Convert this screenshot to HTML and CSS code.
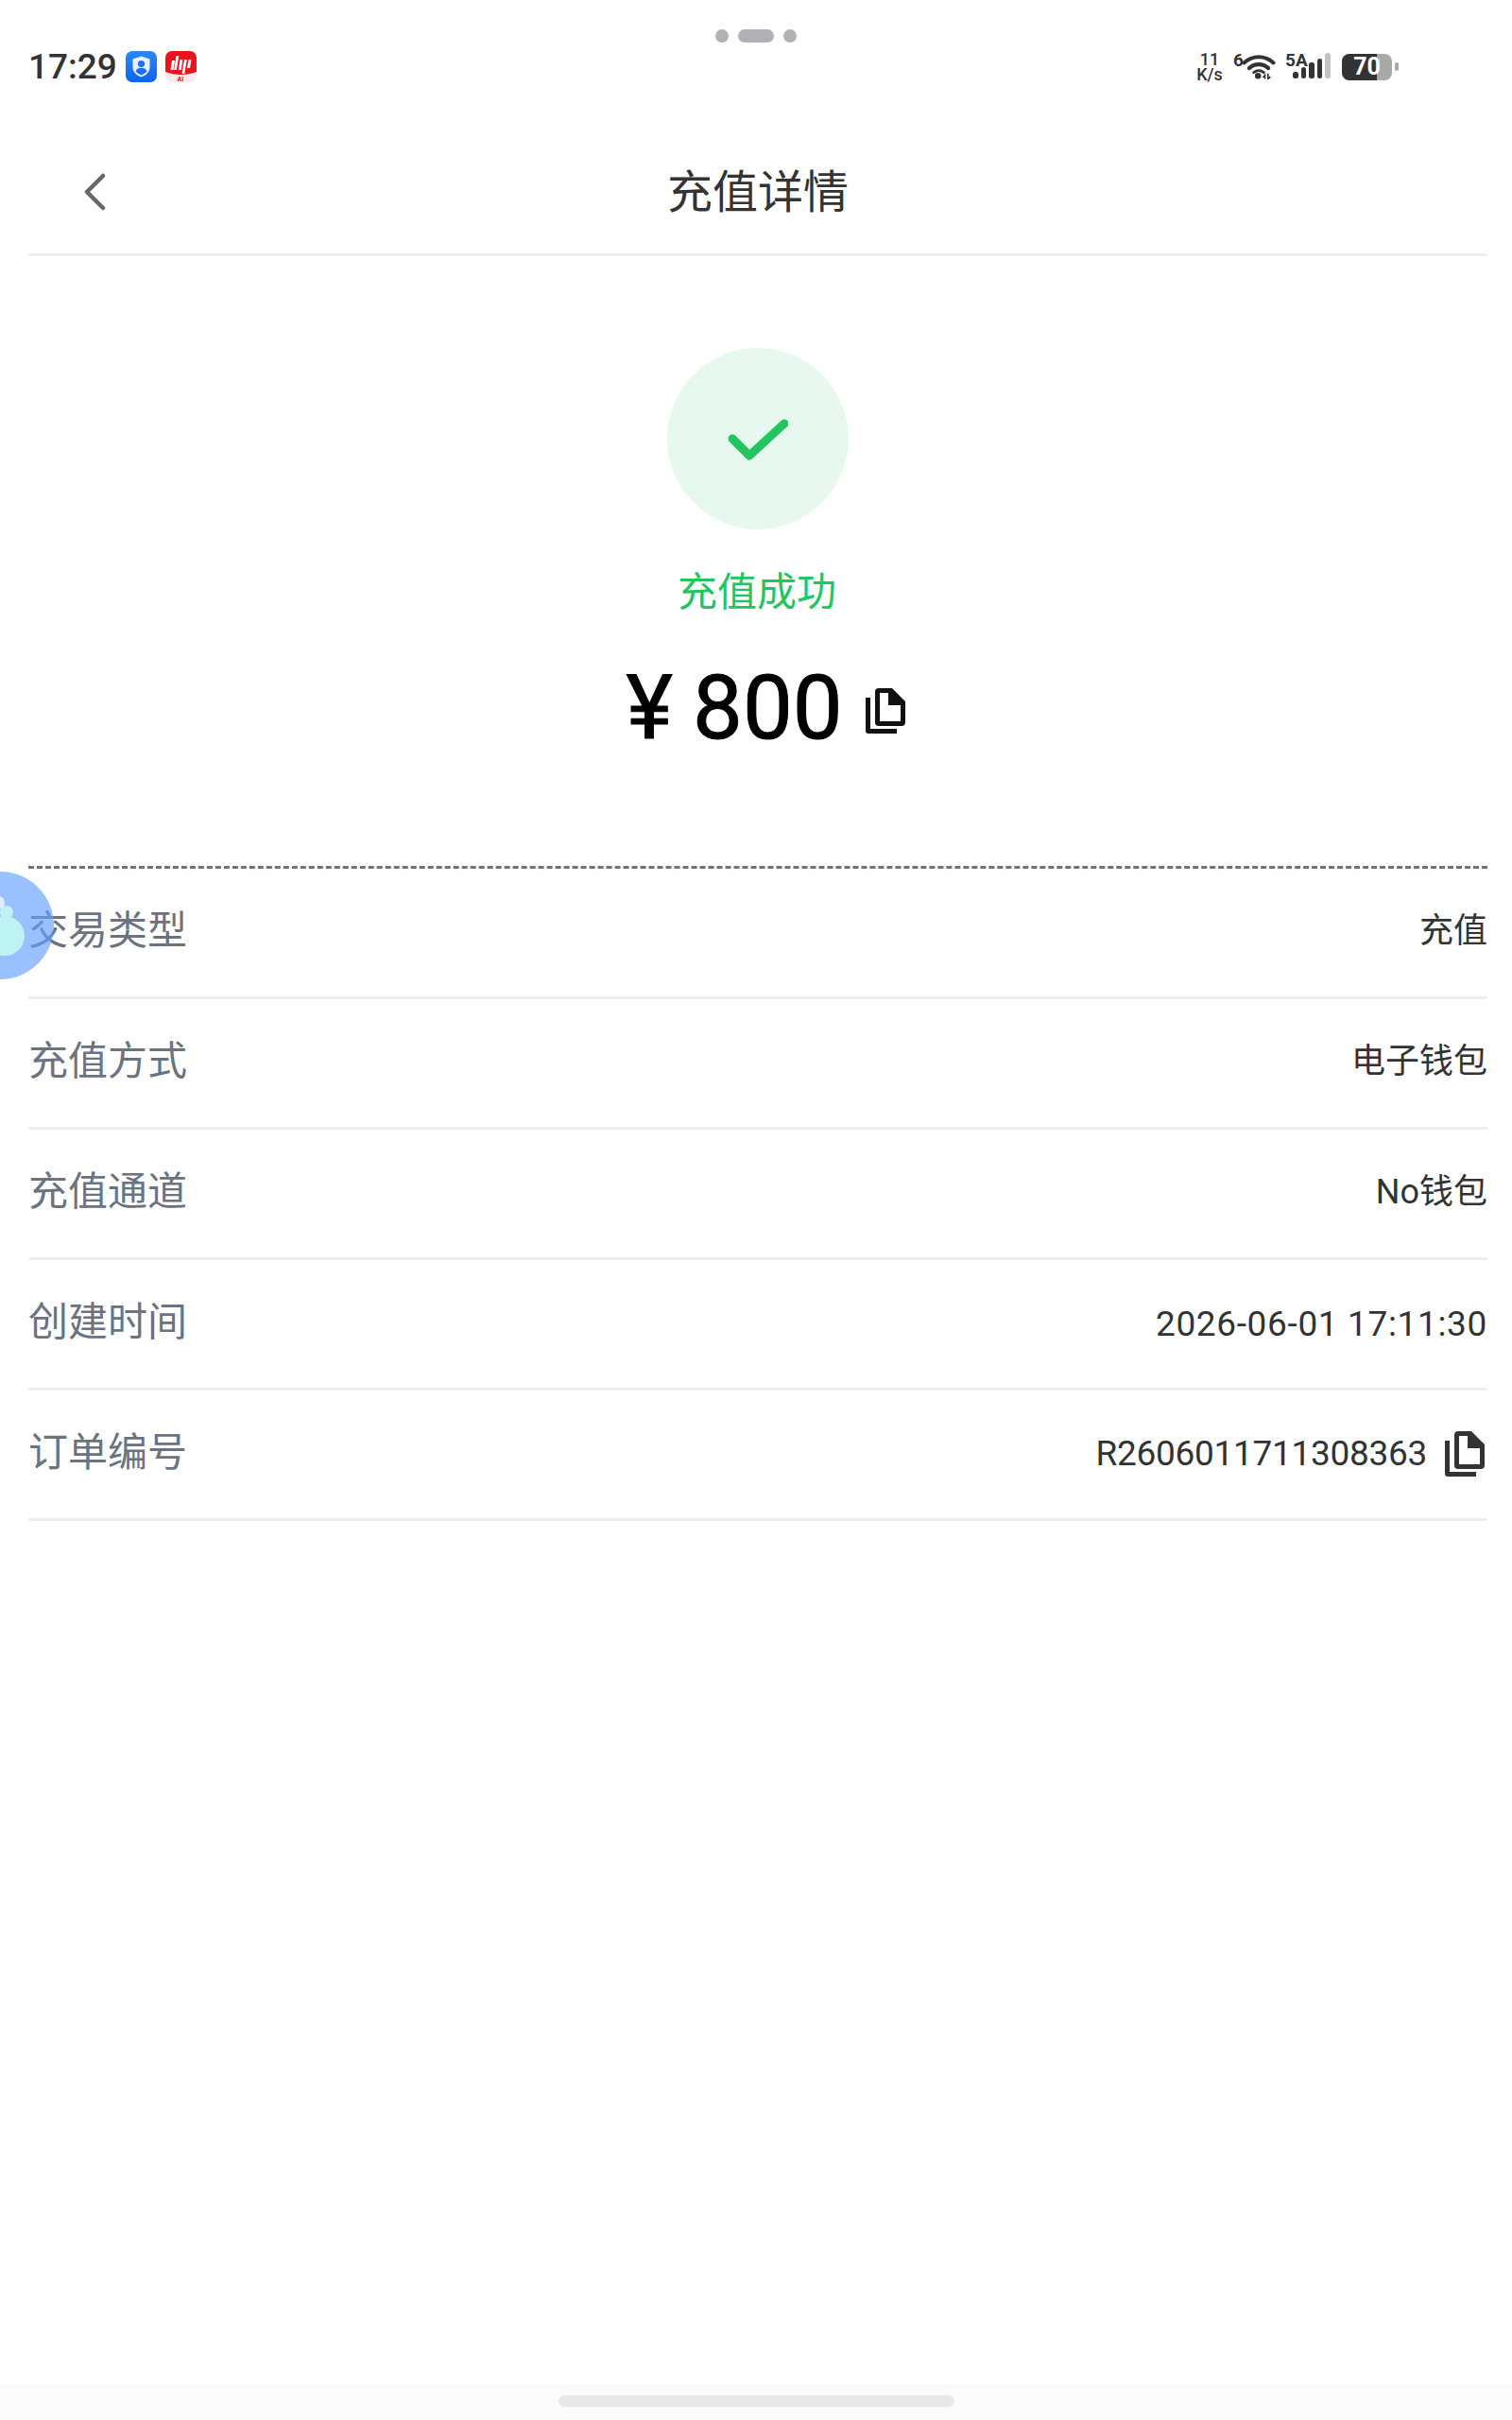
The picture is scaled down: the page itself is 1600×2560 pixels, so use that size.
FILE: index.html
```html
<!DOCTYPE html>
<html lang="zh-CN">
<head>
<meta charset="utf-8">
<title>充值详情</title>
<link rel="stylesheet" href="styles.css">
</head>
<body>
<div class="page">
  <div class="pills"><i class="dot"></i><i class="bar"></i><i class="dot"></i></div>

  <div class="status">
    <div class="status-left">
      <span class="clock">17:29</span>
      <svg class="app-icon" viewBox="0 0 33 33"><defs><linearGradient id="bl" x1="0" y1="0" x2="0" y2="1"><stop offset="0" stop-color="#2f86f6"/><stop offset="1" stop-color="#0e62f2"/></linearGradient></defs><rect width="33" height="33" rx="7" fill="url(#bl)"/><path d="M16.5 5.5 25.5 8.5V17C25.500 22.500 21 25.800 16.500 27.500 12 25.800 7.500 22.500 7.500 17V8.500Z" fill="#e8f2ff"/><circle cx="16.500" cy="13.500" r="3.600" fill="#1f6ff0"/><path d="M10.500 21.500C11.500 18.500 14 17.800 16.500 17.800S21.500 18.500 22.500 21.500C20.800 23.500 18.500 24.800 16.500 25.500 14.500 24.800 12.200 23.500 10.500 21.500Z" fill="#1f6ff0"/></svg>
      <svg class="app-icon" viewBox="0 0 33 33"><rect width="33" height="33" rx="7" fill="#fbeaea"/><path d="M0 7a7 7 0 0 1 7-7h19a7 7 0 0 1 7 7v15c-5 2-11 3-16.500 3S5 24 0 22Z" fill="#e8141c"/><path d="M7 10h3l-1.500 10H5.500ZM11.500 5h2.800l-2.500 15H9ZM15.500 9h2.800l-1.500 11h-2.800ZM20 9h2.800l-2.500 15h-2.800ZM24.500 9h3l-1.500 9h-3Z" fill="#fff"/><text class="ai-text" x="16" y="32" text-anchor="middle">AI</text></svg>
    </div>
    <div class="status-right">
      <span class="speed">11<br>K/s</span>
      <span class="wifi-wrap">
        <span class="wifi-six">6</span>
        <svg class="wifi" viewBox="0 0 44 32"><path d="M3 11C14 1 30 1 41 11" fill="none" stroke="#333" stroke-width="5" stroke-linecap="round"/><path d="M9.500 18C17 11.500 27 11.500 34.500 18" fill="none" stroke="#333" stroke-width="5" stroke-linecap="round"/><path d="M15.500 23.500C19.500 20.500 24.500 20.500 28.500 23.500" fill="none" stroke="#333" stroke-width="3.500" stroke-linecap="round"/><circle cx="21" cy="28" r="4" fill="#333"/><path d="M30 32V27L27.500 30M34 25V32L37 29" fill="none" stroke="#333" stroke-width="2"/></svg>
      </span>
      <span class="signal-wrap">
        <span class="signal-label">5A</span>
        <span class="signal"><i class="s1"></i><i class="s2"></i><i class="s3"></i><i class="s4"></i><i class="s5"></i></span>
      </span>
      <span class="battery"><span class="battery-body"><span class="battery-fill"></span><span class="battery-text">70</span></span><i class="battery-nub"></i></span>
    </div>
  </div>

  <header class="nav">
    <svg class="back" viewBox="0 0 24 40"><path d="M21 3 4 20 21 37" fill="none" stroke="#666" stroke-width="4.500" stroke-linecap="round" stroke-linejoin="round"/></svg>
    <h1 class="title">充值详情</h1>
  </header>

  <section class="hero">
    <div class="success-circle">
      <svg class="check" viewBox="0 0 64 46"><path d="M5 21 23 39 60 5" fill="none" stroke="#22c55e" stroke-width="9" stroke-linecap="round" stroke-linejoin="round"/></svg>
    </div>
    <div class="success-text">充值成功</div>
    <div class="amount">
      <span class="amount-value">¥ 800</span>
      <svg class="copy copy-big" viewBox="0 0 42 48"><use href="#copy-shape"/></svg>
    </div>
  </section>

  <section class="details">
    <div class="row"><span class="label">交易类型</span><span class="value">充值</span></div>
    <div class="row"><span class="label">充值方式</span><span class="value">电子钱包</span></div>
    <div class="row"><span class="label">充值通道</span><span class="value">No钱包</span></div>
    <div class="row"><span class="label">创建时间</span><span class="value value-date">2026-06-01 17:11:30</span></div>
    <div class="row"><span class="label">订单编号</span><span class="value value-order">R2606011711308363<svg class="copy copy-small" viewBox="0 0 42 48"><use href="#copy-shape"/></svg></span></div>
  </section>

  <div class="float-ball">
    <svg viewBox="0 0 60 114"><circle cx="5" cy="68" r="21" fill="#bdf3f2"/><circle cx="7" cy="43" r="7" fill="#bdf3f2"/><circle cx="-2" cy="33" r="7" fill="#ffffff" opacity=".7"/></svg>
  </div>

  <div class="gesture"><i class="gesture-bar"></i></div>
</div>

<svg class="defs" width="0" height="0" aria-hidden="true"><defs>
  <symbol id="copy-shape" viewBox="0 0 42 48">
    <path fill="currentColor" fill-rule="evenodd" d="M14 0H28L42 14V36A4 4 0 0 1 38 40H14A4 4 0 0 1 10 36V4A4 4 0 0 1 14 0ZM15 5V35H37V18H24V5Z"/>
    <path fill="currentColor" d="M0 10H5V43H33V48H3A3 3 0 0 1 0 45Z"/>
  </symbol>
</defs></svg>
</body>
</html>
```
FILE: styles.css
```css
* { box-sizing: border-box; }
html, body { margin: 0; padding: 0; background: #fff; }
.page {
  position: relative;
  width: 1600px;
  height: 2560px;
  display: flex;
  flex-direction: column;
  overflow: hidden;
  font-family: Roboto, "Noto Sans CJK SC", sans-serif;
  color: #333;
}
.defs { position: absolute; }

.pills {
  position: absolute;
  top: 31px;
  left: 757px;
  display: flex;
  align-items: center;
  gap: 10px;
}
.pills i { display: block; height: 14px; background: #b2b2b6; border-radius: 7px; }
.pills .dot { width: 14px; }
.pills .bar { width: 38px; }

.status {
  height: 116px;
  padding: 54px 120px 0 30px;
  display: flex;
  justify-content: space-between;
  align-items: flex-start;
}
.status-left { display: flex; align-items: center; gap: 9px; height: 33px; }
.clock { font-size: 37px; font-weight: 500; color: #333; line-height: 33px; }
.app-icon { width: 33px; height: 33px; display: block; }
.ai-text { font-size: 7px; font-weight: 700; fill: #e8141c; }
.status-right { display: flex; align-items: flex-start; height: 33px; color: #333; }
.speed { width: 30px; margin-top: 1px; font-size: 18px; line-height: 16px; font-weight: 500; text-align: center; }
.wifi-wrap { position: relative; display: block; width: 44px; height: 33px; margin-left: 10px; }
.wifi-six { position: absolute; left: 0; top: 0; font-size: 19px; line-height: 19px; font-weight: 700; }
.wifi { position: absolute; left: 9px; top: 3px; width: 36px; height: 27px; }
.signal-wrap { position: relative; display: block; width: 48px; height: 33px; margin-left: 11px; }
.signal-label { position: absolute; left: 0; top: 0; font-size: 19px; line-height: 19px; font-weight: 700; }
.signal { position: absolute; left: 8px; bottom: 4px; height: 30px; display: flex; align-items: flex-end; gap: 3px; }
.signal i { display: block; width: 5.500px; background: #333; border-radius: 2.500px; }
.signal .s1 { height: 7px; }
.signal .s2 { height: 12px; }
.signal .s3 { height: 17px; }
.signal .s4 { height: 21px; }
.signal .s5 { height: 27px; background: #c4c4c4; }
.battery { display: flex; align-items: center; margin-left: 12px; height: 33px; }
.battery-body { position: relative; display: block; width: 53px; height: 28px; background: #a8a8a8; border-radius: 8px; }
.battery-fill { position: absolute; left: 0; top: 0; bottom: 0; width: 37px; background: #333; border-radius: 8px 0 0 8px; }
.battery-text { position: absolute; left: 0; right: 0; top: 0; font-size: 25px; line-height: 28px; font-weight: 700; color: #fff; text-align: center; }
.battery-nub { display: block; width: 4px; height: 9px; margin-left: 3px; background: #a8a8a8; border-radius: 2px; }

.nav {
  position: relative;
  height: 155px;
  margin: 0 26px 0 30px;
  border-bottom: 3px solid #eeeeee;
  display: flex;
  align-items: center;
  justify-content: center;
}
.back { position: absolute; left: 58px; top: 67px; width: 24px; height: 40px; }
.title { margin: 13px 0 0; font-size: 48px; font-weight: 400; color: #333; }

.hero { display: flex; flex-direction: column; align-items: center; margin: 0 26px 0 30px; padding-top: 97px; height: 645px; }
.success-circle {
  width: 192px;
  height: 192px;
  border-radius: 50%;
  background: #e7f9ef;
  display: flex;
  align-items: center;
  justify-content: center;
}
.check { width: 64px; height: 46px; margin-top: 3px; }
.success-text { margin: 38px 2px 0 0; font-size: 42px; line-height: 58px; color: #22c55e; }
.amount { margin: 25px 0 0 16px; display: flex; align-items: center; gap: 24px; color: #000; }
.amount-value { font-size: 94px; line-height: 136px; font-weight: 400; word-spacing: -2px; -webkit-text-stroke: 1px #000; }
.copy { display: block; width: 42px; height: 48px; }
.copy-big { color: #111; margin-top: 6px; }
.copy-small { color: #333; margin: 2px 3px 0 19px; }

.details { margin: 0 26px 0 30px; border-top: 3px dashed #6b7280; }
.row {
  height: 138px;
  padding-bottom: 12px;
  display: flex;
  align-items: center;
  justify-content: space-between;
  border-bottom: 3px solid #eeeeee;
}
.label { font-size: 42px; color: #6b7280; }
.value { font-size: 36px; color: #333; }
.value-date { font-size: 37px; letter-spacing: .65px; margin-top: 12px; }
.value-order { font-size: 37px; letter-spacing: -.3px; display: flex; align-items: center; margin-top: 9px; }

.float-ball {
  position: absolute;
  left: -57px;
  top: 922px;
  width: 114px;
  height: 114px;
  border-radius: 50%;
  background: rgba(100, 160, 255, .65);
  overflow: hidden;
}
.float-ball svg { position: absolute; left: 57px; top: 0; width: 60px; height: 114px; overflow: visible; }

.gesture {
  margin-top: auto;
  height: 38px;
  background: #fbfbfb;
  display: flex;
  justify-content: center;
  padding-top: 12px;
}
.gesture-bar { display: block; width: 419px; height: 12px; background: #e8e8e8; border-radius: 6px; }
```
